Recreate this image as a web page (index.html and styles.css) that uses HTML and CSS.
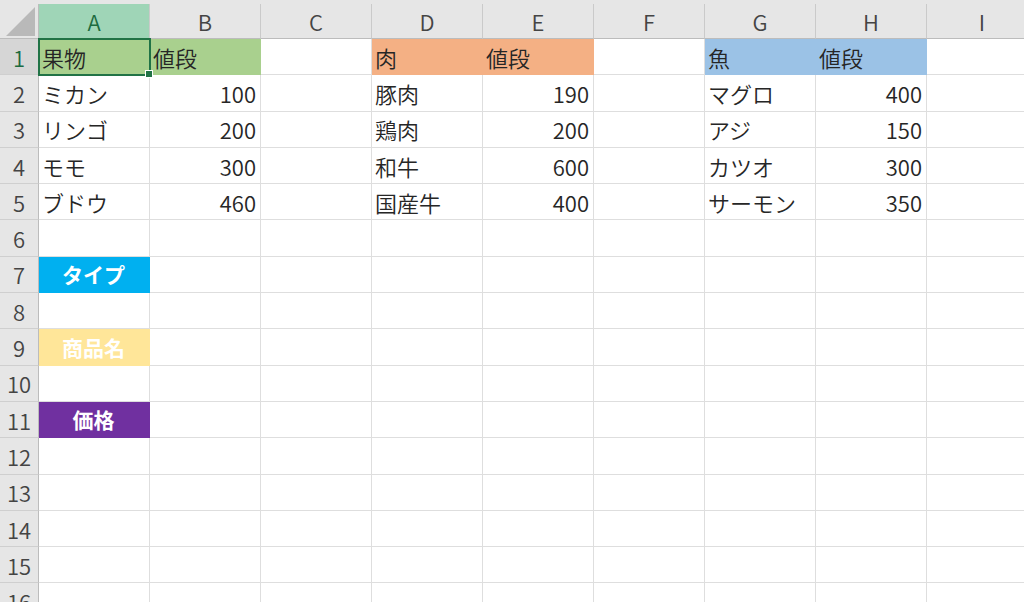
FILE: index.html
```html
<!DOCTYPE html>
<html lang="ja">

<head>
  <meta charset="UTF-8">
  <meta name="viewport" content="width=device-width, initial-scale=1.0">
  <title>Sheet1</title>
  <link rel="stylesheet" href="styles.css">
</head>

<body>
  <div class="ribbon"></div>
  <table class="grid">
    <colgroup>
      <col class="rh">
      <col><col><col><col><col><col><col><col><col>
    </colgroup>
    <thead>
      <tr>
        <th class="corner">
          <svg width="38" height="34" viewBox="0 0 38 34"><polygon points="6,32 35,32 35,3" fill="#b9b9b9"/></svg>
        </th>
        <th class="sel">A</th>
        <th>B</th>
        <th>C</th>
        <th>D</th>
        <th>E</th>
        <th>F</th>
        <th>G</th>
        <th>H</th>
        <th>I</th>
      </tr>
    </thead>
    <tbody>
      <tr>
        <th class="sel">1</th>
        <td class="green active">果物<span class="handle"></span></td>
        <td class="green">値段</td>
        <td></td>
        <td class="orange">肉</td>
        <td class="orange">値段</td>
        <td></td>
        <td class="blue">魚</td>
        <td class="blue">値段</td>
        <td></td>
      </tr>
      <tr>
        <th>2</th>
        <td>ミカン</td>
        <td class="num">100</td>
        <td></td>
        <td>豚肉</td>
        <td class="num">190</td>
        <td></td>
        <td>マグロ</td>
        <td class="num">400</td>
        <td></td>
      </tr>
      <tr>
        <th>3</th>
        <td>リンゴ</td>
        <td class="num">200</td>
        <td></td>
        <td>鶏肉</td>
        <td class="num">200</td>
        <td></td>
        <td>アジ</td>
        <td class="num">150</td>
        <td></td>
      </tr>
      <tr>
        <th>4</th>
        <td>モモ</td>
        <td class="num">300</td>
        <td></td>
        <td>和牛</td>
        <td class="num">600</td>
        <td></td>
        <td>カツオ</td>
        <td class="num">300</td>
        <td></td>
      </tr>
      <tr>
        <th>5</th>
        <td>ブドウ</td>
        <td class="num">460</td>
        <td></td>
        <td>国産牛</td>
        <td class="num">400</td>
        <td></td>
        <td>サーモン</td>
        <td class="num">350</td>
        <td></td>
      </tr>
      <tr>
        <th>6</th>
        <td></td><td></td><td></td><td></td><td></td><td></td><td></td><td></td><td></td>
      </tr>
      <tr>
        <th>7</th>
        <td class="label cyan">タイプ</td>
        <td></td><td></td><td></td><td></td><td></td><td></td><td></td><td></td>
      </tr>
      <tr>
        <th>8</th>
        <td></td><td></td><td></td><td></td><td></td><td></td><td></td><td></td><td></td>
      </tr>
      <tr>
        <th>9</th>
        <td class="label yellow">商品名</td>
        <td></td><td></td><td></td><td></td><td></td><td></td><td></td><td></td>
      </tr>
      <tr>
        <th>10</th>
        <td></td><td></td><td></td><td></td><td></td><td></td><td></td><td></td><td></td>
      </tr>
      <tr>
        <th>11</th>
        <td class="label purple">価格</td>
        <td></td><td></td><td></td><td></td><td></td><td></td><td></td><td></td>
      </tr>
      <tr>
        <th>12</th>
        <td></td><td></td><td></td><td></td><td></td><td></td><td></td><td></td><td></td>
      </tr>
      <tr>
        <th>13</th>
        <td></td><td></td><td></td><td></td><td></td><td></td><td></td><td></td><td></td>
      </tr>
      <tr>
        <th>14</th>
        <td></td><td></td><td></td><td></td><td></td><td></td><td></td><td></td><td></td>
      </tr>
      <tr>
        <th>15</th>
        <td></td><td></td><td></td><td></td><td></td><td></td><td></td><td></td><td></td>
      </tr>
      <tr>
        <th>16</th>
        <td></td><td></td><td></td><td></td><td></td><td></td><td></td><td></td><td></td>
      </tr>
    </tbody>
  </table>
</body>

</html>
```

FILE: styles.css
```css
body {
  margin: 0;
  overflow: hidden;
  background: #fff;
  font-family: "Noto Sans CJK JP", "Noto Sans", sans-serif;
  color: #262626;
}
.ribbon {
  height: 4px;
  width: 1038px;
  background: #e6e6e6;
}
.grid {
  table-layout: fixed;
  width: 1038px;
  border-collapse: separate;
  border-spacing: 0;
  font-size: 22px;
  font-weight: 350;
}
.grid col {
  width: 111px;
}
.grid col.rh {
  width: 39px;
}
/* column headers */
thead th {
  height: 34px;
  padding: 0;
  background: #e6e6e6;
  border-right: 1px solid #cacaca;
  border-bottom: 1px solid #bcbcbc;
  font-weight: 350;
  color: #444;
  text-align: center;
  vertical-align: middle;
  box-sizing: border-box;
  line-height: 1;
}
thead th.sel {
  background: #9fd5b7;
  color: #1d6b40;
  border-bottom-color: #217346;
}
th.corner {
  border-right-color: #bcbcbc;
}
th.corner svg {
  display: block;
}
/* rows */
tbody tr {
  height: 36.3px;
}
tbody th {
  padding: 0;
  background: #e6e6e6;
  border-right: 1px solid #bcbcbc;
  border-bottom: 1px solid #cfcfcf;
  font-weight: 350;
  color: #444;
  text-align: center;
  line-height: 1;
}
tbody th.sel {
  background: #d6d6d6;
  color: #1d6b40;
}
td {
  padding: 0 4px 0 3px;
  border-right: 1px solid #dedede;
  border-bottom: 1px solid #dedede;
  white-space: nowrap;
  overflow: visible;
  line-height: 1;
  vertical-align: middle;
}
td.num {
  text-align: right;
}
td.green,
td.orange,
td.blue,
td.label {
  border-color: transparent;
}
td.green { background: #a9d08e; }
td.orange { background: #f4b084; }
td.blue { background: #9bc2e6; }
td.label {
  text-align: center;
  color: #fff;
  font-weight: bold;
  font-size: 21px;
}
td.cyan { background: #00b0f0; }
td.yellow { background: #ffe699; }
td.purple { background: #7030a0; }
td.active {
  position: relative;
  outline: 2px solid #217346;
  outline-offset: -1px;
}
.handle {
  position: absolute;
  right: -4px;
  bottom: -4px;
  width: 6px;
  height: 6px;
  background: #217346;
  border: 1px solid #fff;
}
```
